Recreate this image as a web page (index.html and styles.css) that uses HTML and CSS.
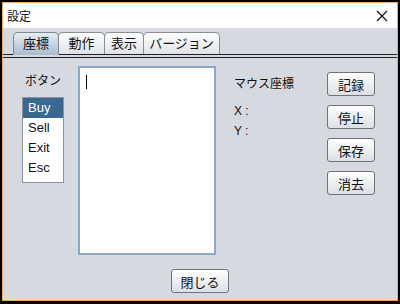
FILE: index.html
```html
<!DOCTYPE html>
<html lang="ja">
<head>
  <meta charset="UTF-8">
  <title>設定</title>
  <link rel="stylesheet" href="styles.css">
</head>
<body>
  <div class="window">
    <div class="titlebar">
      <span class="title">設定</span>
      <svg class="close" width="12" height="12" viewBox="0 0 12 12">
        <path d="M1 1 L11 11 M11 1 L1 11" stroke="#111" stroke-width="1.2" fill="none"/>
      </svg>
    </div>
    <div class="pane">
      <div class="tabs">
        <div class="tab active w1">座標</div>
        <div class="tab w2">動作</div>
        <div class="tab w3">表示</div>
        <div class="tab w4">バージョン</div>
      </div>
      <div class="panel">
        <div class="row">
          <div class="col-list">
            <div class="label">ボタン</div>
            <ul class="list">
              <li class="sel">Buy</li>
              <li>Sell</li>
              <li>Exit</li>
              <li>Esc</li>
            </ul>
          </div>
          <div class="textarea"><span class="caret"></span></div>
          <div class="info">
            <div class="info-title">マウス座標</div>
            <div class="coord x">X :</div>
            <div class="coord">Y :</div>
          </div>
          <div class="actions">
            <button class="btn">記録</button>
            <button class="btn">停止</button>
            <button class="btn">保存</button>
            <button class="btn">消去</button>
          </div>
        </div>
        <div class="footer">
          <button class="btn close-btn">閉じる</button>
        </div>
      </div>
    </div>
  </div>
</body>
</html>
```
FILE: styles.css
```css
* {
  box-sizing: border-box;
}
body {
  margin: 0;
  background-color: #000;
  font-family: "Liberation Sans", "Noto Sans CJK JP", sans-serif;
  font-size: 12px;
  color: #111;
}
.window {
  width: 400px;
  height: 304px;
  border: 2px solid #000;
  border-bottom-width: 3px;
}
.window > * {
  background-color: #d6d9df;
}
.window {
  background-color: #f0a868;
  padding: 1px;
  display: flex;
  flex-direction: column;
}
.titlebar {
  height: 25px;
  background-color: #fff;
  display: flex;
  align-items: center;
  justify-content: space-between;
  padding: 0 9px 0 4px;
}
.title {
  font-size: 12px;
}
.pane {
  flex-grow: 1;
  display: flex;
  flex-direction: column;
  padding-top: 4px;
}
.tabs {
  display: flex;
  padding-left: 10px;
  border-bottom: 1px solid #222;
  height: 23px;
}
.tab {
  height: 22px;
  border: 1px solid #8a8f96;
  border-bottom: none;
  border-radius: 5px 5px 0 0;
  background: linear-gradient(#ffffff, #dfe2e7);
  font-size: 13px;
  text-align: center;
  line-height: 21px;
  margin-left: -1px;
}
.tab.active {
  height: 23px;
  margin-left: 0;
  background: linear-gradient(#e6ecf2, #a9bccd);
  border-color: #7e8a96;
  position: relative;
  z-index: 1;
}
.w1 { width: 46px; }
.w2 { width: 47px; }
.w3 { width: 40px; }
.w4 { width: 77px; }
.panel {
  flex-grow: 1;
  margin-top: 2px;
  border-top: 1px solid #222;
  display: flex;
  flex-direction: column;
}
.row {
  display: flex;
  padding: 8px 0 0 19px;
}
.col-list {
  width: 42px;
  margin-right: 14px;
}
.label {
  margin: 8px 0 9px 3px;
  line-height: 14px;
}
.list {
  list-style: none;
  margin: 0;
  padding: 0 0 4px;
  background-color: #fff;
  border: 1px solid #8d939a;
}
.list li {
  height: 20px;
  line-height: 20px;
  padding-left: 5px;
  font-size: 13px;
}
.list li.sel {
  background-color: #3a6990;
  color: #fff;
}
.textarea {
  width: 138px;
  height: 189px;
  background-color: #fff;
  border: 2px solid #8ea7c6;
  padding: 7px 0 0 6px;
}
.caret {
  display: block;
  width: 1px;
  height: 14px;
  background-color: #000;
}
.info {
  width: 93px;
  margin-left: 18px;
}
.info-title {
  margin-top: 11px;
  line-height: 14px;
}
.coord {
  line-height: 14px;
  margin-top: 6px;
}
.coord.x {
  margin-top: 13px;
}
.actions {
  display: flex;
  flex-direction: column;
  gap: 9px;
  margin-top: 6px;
}
.btn {
  width: 48px;
  height: 24px;
  padding: 0;
  font-family: "Liberation Sans", "Noto Sans CJK JP", sans-serif;
  font-size: 13px;
  color: #111;
  border: 1px solid #6f7378;
  border-radius: 3px;
  background: linear-gradient(#ffffff, #dcdfe4);
}
.footer {
  display: flex;
  justify-content: center;
  margin-top: 14px;
}
.close-btn {
  width: 58px;
}
```
